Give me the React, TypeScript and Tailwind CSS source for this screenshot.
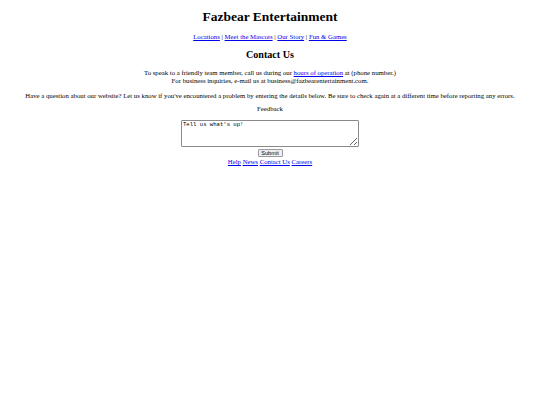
import React from "react";

const link = "text-[#0000ee] underline";

export default function App() {
  return (
    <div className="text-center text-[6.75px] leading-[8px] text-black bg-white pt-[9px]" style={{ fontFamily: '"Liberation Serif", serif' }}>
      <h1 className="text-[13.5px] leading-[15px] font-bold">Fazbear Entertainment</h1>
      <div className="mt-[9px]">
        <a className={link} href="#">Locations</a> |{" "}
        <a className={link} href="#">Meet the Mascots</a> |{" "}
        <a className={link} href="#">Our Story</a> |{" "}
        <a className={link} href="#">Fun &amp; Games</a>
      </div>
      <h2 className="mt-[8px] text-[10.1px] leading-[12px] font-bold">Contact Us</h2>
      <p className="mt-[8px]">
        To speak to a friendly team member, call us during our{" "}
        <a className={link} href="#">hours of operation</a> at (phone number.)
        <br />
        For business inquiries, e-mail us at business@fazbearentertainment.com.
      </p>
      <p className="mt-[7px]">
        Have a question about our website? Let us know if you've encountered a problem by entering the details below. Be sure to check again at a different time before reporting any errors.
      </p>
      <p className="mt-[5px]">Feedback</p>
      <div className="flex justify-center mt-[7px]">
        <textarea
          className="w-[178px] h-[27px] border border-[#8a8a8a] rounded-[1px] px-[1px] py-[1px] text-[5.6px] leading-[6.5px] text-black resize outline-none"
          style={{ fontFamily: '"Liberation Mono", monospace' }}
          defaultValue="Tell us what's up!"
        />
      </div>
      <div className="flex justify-center mt-[2px]">
        <button
          className="w-[25px] h-[8px] text-[5.6px] leading-[6px] bg-[#efefef] border border-[#9a9a9a] rounded-[1px] p-0"
          style={{ fontFamily: '"Liberation Sans", Arial, sans-serif' }}
        >
          Submit
        </button>
      </div>
      <div className="mt-[1px]">
        <a className={link} href="#">Help</a>{" "}
        <a className={link} href="#">News</a>{" "}
        <a className={link} href="#">Contact Us</a>{" "}
        <a className={link} href="#">Careers</a>
      </div>
    </div>
  );
}
